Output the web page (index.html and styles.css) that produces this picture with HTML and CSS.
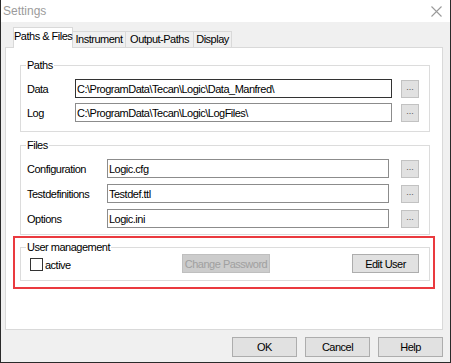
FILE: index.html
```html
<!DOCTYPE html>
<html lang="en">
<head>
  <meta charset="UTF-8">
  <title>Settings</title>
  <link rel="stylesheet" href="styles.css">
</head>
<body>

<div class="window">
  <div class="titlebar">
    <span class="title">Settings</span>
    <svg class="close" width="11" height="11" viewBox="0 0 11 11">
      <path d="M0.5 0.5 L10.5 10.5 M10.5 0.5 L0.5 10.5" stroke="#9a9a9a" stroke-width="1.1" fill="none"/>
    </svg>
  </div>

  <div class="client">
    <div class="tabs">
      <div class="tab selected tab-paths">Paths &amp; Files</div>
      <div class="tab tab-instrument">Instrument</div>
      <div class="tab tab-output">Output-Paths</div>
      <div class="tab tab-display">Display</div>
    </div>

    <div class="panel">
      <fieldset class="group group-paths">
        <legend>Paths</legend>
        <div class="row">
          <span class="label">Data</span>
          <input type="text" class="textbox focused" value="C:\ProgramData\Tecan\Logic\Data_Manfred\" readonly>
          <button class="browse">...</button>
        </div>
        <div class="row">
          <span class="label">Log</span>
          <input type="text" class="textbox" value="C:\ProgramData\Tecan\Logic\LogFiles\" readonly>
          <button class="browse">...</button>
        </div>
      </fieldset>

      <fieldset class="group group-files">
        <legend>Files</legend>
        <div class="row">
          <span class="label">Configuration</span>
          <input type="text" class="textbox" value="Logic.cfg" readonly>
          <button class="browse">...</button>
        </div>
        <div class="row">
          <span class="label">Testdefinitions</span>
          <input type="text" class="textbox" value="Testdef.ttl" readonly>
          <button class="browse">...</button>
        </div>
        <div class="row">
          <span class="label">Options</span>
          <input type="text" class="textbox" value="Logic.ini" readonly>
          <button class="browse">...</button>
        </div>
      </fieldset>

      <div class="highlight">
        <fieldset class="group group-users">
          <legend>User management</legend>
          <div class="user-row">
            <label class="check"><span class="box"></span>active</label>
            <button class="btn disabled">Change Password</button>
            <button class="btn edit-user">Edit User</button>
          </div>
        </fieldset>
      </div>
    </div>

    <div class="actions">
      <button class="btn dialog-btn">OK</button>
      <button class="btn dialog-btn">Cancel</button>
      <button class="btn dialog-btn">Help</button>
    </div>
  </div>
</div>

</body>
</html>
```

FILE: styles.css
```css
* {
  box-sizing: border-box;
}
body {
  margin: 0;
  font-family: "Liberation Sans", Arial, sans-serif;
  font-size: 11px;
  letter-spacing: -0.5px;
  color: #000;
  background: #fff;
  white-space: nowrap;
}
.window {
  width: 451px;
  height: 363px;
  border: 1px solid #2a2a2a;
  border-top: none;
  display: flex;
  flex-direction: column;
}
.titlebar {
  height: 22px;
  background: #fff;
  display: flex;
  align-items: center;
  padding-left: 2px;
  padding-right: 8px;
}
.title {
  font-size: 12px;
  letter-spacing: 0;
  color: #9b9b9b;
  flex: 1;
}
.close {
  display: block;
}
.client {
  flex: 1;
  background: #f0f0f0;
  padding: 5px 7px 0 4px;
}

/* tabs */
.tabs {
  display: flex;
  align-items: flex-end;
  height: 20px;
  margin-left: 8px;
}
.tab {
  height: 16px;
  border: 1px solid #d9d9d9;
  border-bottom: none;
  background: #f0f0f0;
  margin-left: -1px;
  text-align: center;
  line-height: 15px;
}
.tab.selected {
  height: 21px;
  background: #fff;
  margin-bottom: -1px;
  margin-left: 0;
  position: relative;
  z-index: 1;
  line-height: 17px;
}
.tab-paths { width: 60px; }
.tab-instrument { width: 54px; }
.tab-output { width: 69px; }
.tab-display { width: 39px; }

.panel {
  width: 438px;
  height: 283px;
  background: #fff;
  border: 1px solid #d9d9d9;
}

/* groups */
.group {
  margin: 0 0 0 14px;
  width: 410px;
  border: 1px solid #dcdcdc;
  padding: 7px 10px 9px 6px;
  min-width: 0;
}
.group legend {
  padding: 0 1px;
  margin-left: -1px;
  line-height: 13px;
}
.group-paths {
  margin-top: 11px;
}
.group-files {
  margin-top: 7px;
  padding-bottom: 6px;
}
.row {
  display: flex;
  align-items: center;
  height: 19px;
}
.row + .row {
  margin-top: 5px;
}
.group-files .row + .row {
  margin-top: 6px;
}
.label {
  width: 48px;
}
.group-files .label {
  width: 80px;
}
.textbox {
  height: 19px;
  width: 317px;
  border: 1px solid #8c8c8c;
  font: inherit;
  font-size: 11px;
  letter-spacing: -0.5px;
  padding: 0 1px;
  outline: none;
  background: #fff;
  color: #000;
}
.textbox.focused {
  border-color: #333;
}
.group-files .textbox {
  width: 282px;
}
.browse {
  width: 18px;
  height: 18px;
  margin-left: auto;
  border: 1px solid #c2c2c2;
  background: #e1e1e1;
  font: inherit;
  font-size: 9px;
  letter-spacing: 0;
  color: #555;
  padding: 0 0 3px;
  line-height: 10px;
}

/* user management */
.highlight {
  margin: 1px 0 0 7px;
  width: 422px;
  border: 2px solid #ea3a3f;
  padding: 3px 2px 6px 5px;
}
.group-users {
  margin: 0;
  padding: 0 10px 7px 9px;
}
.group-users legend {
  margin-left: -4px;
}
.user-row {
  display: flex;
  align-items: center;
  height: 19px;
}
.check {
  display: flex;
  align-items: center;
  width: 152px;
  margin-top: 2px;
}
.box {
  width: 13px;
  height: 13px;
  border: 1px solid #333;
  background: #fff;
  margin-right: 2px;
}
.btn {
  height: 19px;
  border: 1px solid #adadad;
  background: #e1e1e1;
  font: inherit;
  font-size: 11px;
  letter-spacing: -0.5px;
  color: #000;
  padding: 0;
}
.btn.disabled {
  width: 88px;
  background: #cccccc;
  border-color: #bfbfbf;
  color: #a0a0a0;
}
.edit-user {
  width: 67px;
  margin-left: auto;
}

/* dialog buttons */
.actions {
  display: flex;
  justify-content: flex-end;
  gap: 8px;
  margin-top: 7px;
}
.dialog-btn {
  width: 65px;
  height: 20px;
}
```
